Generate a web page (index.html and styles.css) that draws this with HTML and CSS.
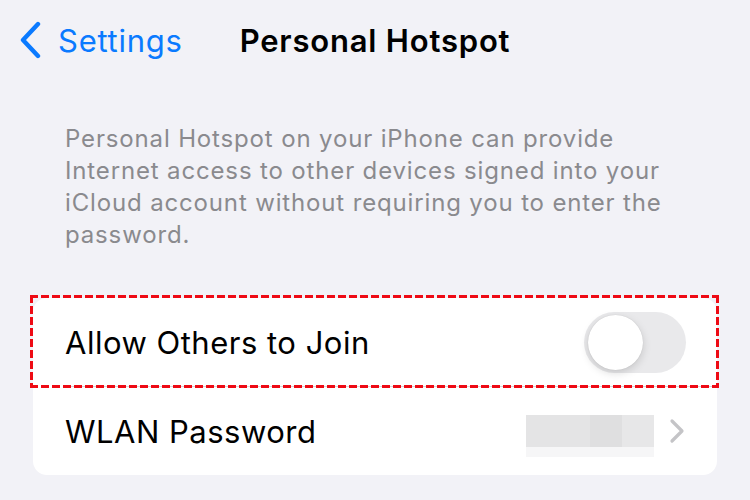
FILE: index.html
```html
<!DOCTYPE html>
<html lang="en">
<head>
<meta charset="utf-8">
<title>Personal Hotspot</title>
<link rel="stylesheet" href="styles.css">
</head>
<body>
<div class="screen">
  <header class="navbar">
    <a class="back">
      <svg class="back-chevron" width="24" height="38" viewBox="0 0 24 38" aria-hidden="true">
        <path d="M20 3 L5 19 L20 35" fill="none" stroke="#0a7aff" stroke-width="4.4" stroke-linecap="round" stroke-linejoin="round"/>
      </svg>
      <span class="back-label">Settings</span>
    </a>
    <h1 class="title">Personal Hotspot</h1>
    <span class="nav-spacer"></span>
  </header>

  <p class="footnote">Personal Hotspot on your iPhone can provide Internet access to other devices signed into your iCloud account without requiring you to enter the password.</p>

  <section class="group">
    <div class="row row-highlight">
      <span class="row-label">Allow Others to Join</span>
      <span class="switch"><span class="knob"></span></span>
    </div>
    <div class="separator"></div>
    <div class="row">
      <span class="row-label">WLAN Password</span>
      <span class="row-value">
        <span class="masked"></span>
        <svg class="disclosure" width="16" height="26" viewBox="0 0 16 26" aria-hidden="true">
          <path d="M3 3 L13 13 L3 23" fill="none" stroke="#c4c4c7" stroke-width="3.2" stroke-linecap="round" stroke-linejoin="round"/>
        </svg>
      </span>
    </div>
  </section>
</div>
</body>
</html>
```

FILE: styles.css
```css
* { box-sizing: border-box; }

html, body {
  margin: 0;
  padding: 0;
  background: #f2f2f7;
}

body {
  font-family: Inter, "Noto Sans", "Liberation Sans", sans-serif;
  color: #000;
  width: 750px;
  height: 500px;
  overflow: hidden;
}

.screen {
  display: flex;
  flex-direction: column;
}

.navbar {
  display: grid;
  grid-template-columns: 1fr auto 1fr;
  align-items: center;
  height: 80px;
  padding: 0 18px;
}

.back {
  display: flex;
  align-items: center;
  gap: 16px;
  color: #0a7aff;
}

.back-label {
  font-size: 31px;
  letter-spacing: 0.75px;
}

.title {
  margin: 0;
  font-size: 31px;
  font-weight: 600;
  letter-spacing: 0.8px;
}

.footnote {
  margin: 43px 70px 0 65px;
  font-size: 24px;
  line-height: 32px;
  color: #8a8a8e;
  letter-spacing: 0.85px;
}

.group {
  margin: 47px 33px 0 33px;
  background: #fff;
  border-radius: 14px;
}

.row {
  display: flex;
  align-items: center;
  justify-content: space-between;
  height: 88px;
  padding: 0 32px 0 32px;
}

.row-highlight {
  position: relative;
  padding-right: 31px;
}

.row-highlight::after {
  content: "";
  position: absolute;
  top: -3px;
  left: -3px;
  right: -2px;
  bottom: -2px;
  pointer-events: none;
  background:
    repeating-linear-gradient(90deg, #ee0a14 0 8px, transparent 8px 11px) top left / 100% 3px no-repeat,
    repeating-linear-gradient(90deg, #ee0a14 0 8px, transparent 8px 11px) bottom left / 100% 3px no-repeat,
    repeating-linear-gradient(180deg, #ee0a14 0 8px, transparent 8px 11px) top left / 3px 100% no-repeat,
    repeating-linear-gradient(180deg, #ee0a14 0 8px, transparent 8px 11px) top right / 3px 100% no-repeat;
}

.row-label {
  font-size: 31px;
  letter-spacing: 0.5px;
}

.switch {
  position: relative;
  width: 102px;
  height: 61px;
  border-radius: 31px;
  background: #e9e9eb;
}

.knob {
  position: absolute;
  top: 3px;
  left: 4px;
  width: 55px;
  height: 55px;
  border-radius: 50%;
  background: #fff;
  box-shadow: 0 3px 8px rgba(0,0,0,0.15), 0 0 1px rgba(0,0,0,0.16);
}

.separator {
  height: 1px;
  margin-left: 31px;
  background: #d4d4d8;
}

.row-value {
  display: flex;
  align-items: center;
  gap: 15px;
}

.masked {
  width: 128px;
  height: 42px;
  margin-top: 10px;
  background:
    linear-gradient(180deg, transparent 0 32px, #f6f6f7 32px 42px),
    linear-gradient(90deg, #e4e4e5 0 64px, #dfdfe0 64px 96px, #e7e7e8 96px 128px);
}

.disclosure {
  margin-right: 0;
}
```
